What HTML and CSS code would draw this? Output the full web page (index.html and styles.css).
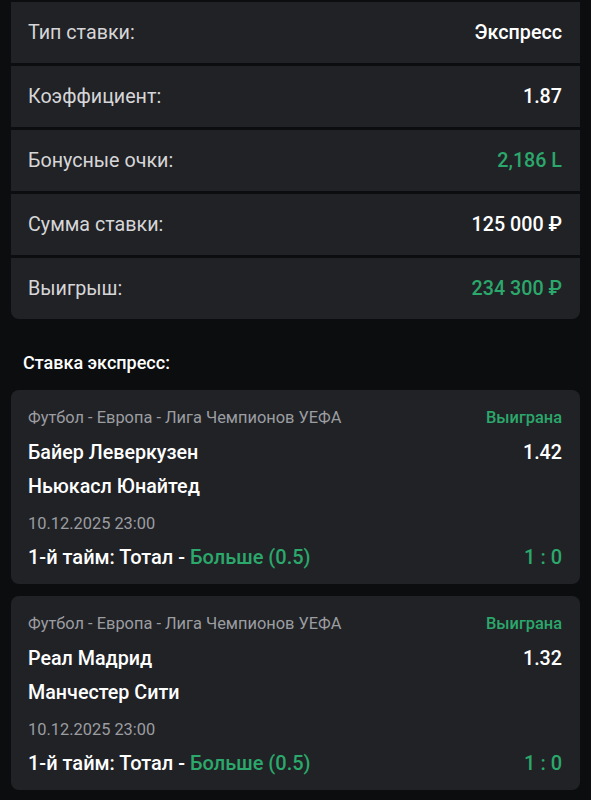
FILE: index.html
```html
<!DOCTYPE html>
<html lang="ru">
<head>
    <meta charset="UTF-8">
    <meta name="viewport" content="width=device-width, initial-scale=1.0">
    <title>Ставка</title>
    <link rel="stylesheet" href="styles.css">
</head>
<body>
    <div class="page">
        <div class="summary">
            <div class="summary-row">
                <span class="label">Тип ставки:</span>
                <span class="value">Экспресс</span>
            </div>
            <div class="summary-row">
                <span class="label">Коэффициент:</span>
                <span class="value">1.87</span>
            </div>
            <div class="summary-row">
                <span class="label">Бонусные очки:</span>
                <span class="value green">2,186 L</span>
            </div>
            <div class="summary-row">
                <span class="label">Сумма ставки:</span>
                <span class="value">125 000 ₽</span>
            </div>
            <div class="summary-row">
                <span class="label">Выигрыш:</span>
                <span class="value green">234 300 ₽</span>
            </div>
        </div>

        <h3 class="section-title">Ставка экспресс:</h3>

        <div class="event-card">
            <div class="event-top">
                <span class="league">Футбол - Европа - Лига Чемпионов УЕФА</span>
                <span class="status">Выиграна</span>
            </div>
            <div class="team-row">
                <span>Байер Леверкузен</span>
                <span>1.42</span>
            </div>
            <div class="team-row">
                <span>Ньюкасл Юнайтед</span>
            </div>
            <div class="event-date">10.12.2025 23:00</div>
            <div class="event-bottom">
                <span>1-й тайм: Тотал - <span class="green">Больше (0.5)</span></span>
                <span class="green">1 : 0</span>
            </div>
        </div>

        <div class="event-card">
            <div class="event-top">
                <span class="league">Футбол - Европа - Лига Чемпионов УЕФА</span>
                <span class="status">Выиграна</span>
            </div>
            <div class="team-row">
                <span>Реал Мадрид</span>
                <span>1.32</span>
            </div>
            <div class="team-row">
                <span>Манчестер Сити</span>
            </div>
            <div class="event-date">10.12.2025 23:00</div>
            <div class="event-bottom">
                <span>1-й тайм: Тотал - <span class="green">Больше (0.5)</span></span>
                <span class="green">1 : 0</span>
            </div>
        </div>
    </div>
</body>
</html>
```

FILE: styles.css
```css
* {
    padding: 0;
    margin: 0;
    box-sizing: border-box;
}

body {
    background-color: #0c0d0f;
    font-family: Roboto, "Noto Sans", sans-serif;
    color: #ffffff;
}

.page {
    padding: 2px 11px 0;
}

.summary {
    display: flex;
    flex-direction: column;
    gap: 3px;
}

.summary-row {
    display: flex;
    justify-content: space-between;
    align-items: center;
    height: 61px;
    padding: 0 18px 0 17px;
    background-color: #212226;
    font-size: 19.7px;
}

.summary-row:last-child {
    border-radius: 0 0 8px 8px;
}

.label {
    color: #d6d6d8;
}

.value {
    font-weight: 500;
    color: #ffffff;
}

.green {
    color: #2ba86b;
}

.section-title {
    font-size: 18px;
    font-weight: 500;
    color: #ffffff;
    padding: 33px 0 0 12px;
    line-height: 22px;
    margin-bottom: 16px;
}

.event-card {
    background-color: #212226;
    border-radius: 8px;
    padding: 16px 18px 12px 17px;
    margin-bottom: 12px;
}

.event-top {
    display: flex;
    justify-content: space-between;
    line-height: 24px;
    font-size: 16.4px;
}

.league {
    color: #9b9da1;
}

.status {
    color: #2ba86b;
    font-weight: 500;
}

.team-row {
    display: flex;
    justify-content: space-between;
    font-size: 19.7px;
    font-weight: 500;
    line-height: 34px;
}

.event-top + .team-row {
    margin-top: 6px;
}

.event-date {
    font-size: 16.4px;
    line-height: 24px;
    color: #9b9da1;
    margin-top: 8px;
}

.event-bottom {
    display: flex;
    justify-content: space-between;
    font-size: 20px;
    font-weight: 500;
    line-height: 30px;
    margin-top: 6px;
}
```
